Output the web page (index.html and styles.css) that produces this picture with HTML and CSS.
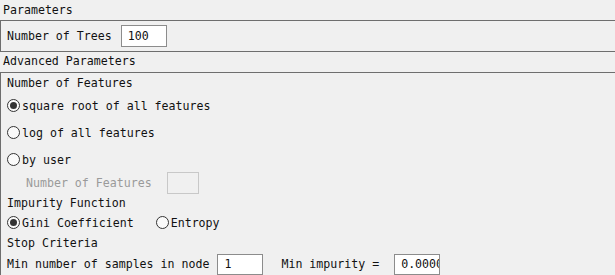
FILE: index.html
```html
<!DOCTYPE html>
<html lang="en">

<head>
    <meta charset="UTF-8">
    <title>Random Forest Parameters</title>
    <link rel="stylesheet" href="styles.css">
</head>

<body>
    <div class="title">Parameters</div>
    <div class="box box-basic">
        <div class="row">
            <span class="label">Number of Trees</span>
            <input class="field field-trees" type="text" value="100">
        </div>
    </div>

    <div class="title title-adv">Advanced Parameters</div>
    <div class="box box-adv">
        <div class="row r-head">Number of Features</div>
        <label class="row r-radio"><span class="radio checked"></span>square root of all features</label>
        <label class="row r-radio"><span class="radio"></span>log of all features</label>
        <label class="row r-radio"><span class="radio"></span>by user</label>
        <div class="row r-user">
            <span class="label disabled">Number of Features</span>
            <span class="field field-off"></span>
        </div>
        <div class="row r-imp">Impurity Function</div>
        <div class="row r-gini">
            <label class="opt"><span class="radio checked"></span>Gini Coefficient</label>
            <label class="opt opt-entropy"><span class="radio"></span>Entropy</label>
        </div>
        <div class="row r-stop">Stop Criteria</div>
        <div class="row r-min">
            <span class="label">Min number of samples in node</span>
            <input class="field field-min" type="text" value="1">
            <span class="label label-imp">Min impurity =</span>
            <input class="field field-imp" type="text" value="0.0000">
        </div>
    </div>
</body>

</html>
```

FILE: styles.css
```css
body {
    margin: 0;
    background: #f0f0f0;
    font-family: "DejaVu Sans Mono", "Liberation Mono", monospace;
    font-size: 11.6px;
    color: #111;
    overflow: hidden;
    height: 275px;
}

.title {
    height: 20px;
    line-height: 20px;
    padding-left: 3px;
}

.title-adv {
    height: 20px;
    line-height: 18px;
}

.box {
    border: 1px solid #6e6e6e;
    border-right: none;
}

.box-basic {
    height: 30px;
    display: flex;
    align-items: center;
    padding-left: 6px;
}

.box-adv {
    border-bottom: none;
    padding-left: 6px;
    height: 210px;
}

.row {
    display: flex;
    align-items: center;
    white-space: nowrap;
}

.field {
    box-sizing: border-box;
    width: 46px;
    height: 22px;
    border: 1px solid #8c8c8c;
    background: #fff;
    font: inherit;
    color: #111;
    padding: 0 0 0 6px;
    margin: 0;
    outline: none;
}

.field-trees {
    margin-left: 9px;
}

.r-head {
    height: 20px;
}

.r-radio {
    height: 27px;
}

.r-radio:first-of-type {
    margin-top: -1px;
}

.radio {
    box-sizing: border-box;
    width: 13px;
    height: 13px;
    border: 1px solid #333;
    border-radius: 50%;
    background: #fafafa;
    margin-right: 2px;
    position: relative;
    flex: none;
}

.radio.checked::after {
    content: "";
    position: absolute;
    left: 2px;
    top: 2px;
    width: 7px;
    height: 7px;
    border-radius: 50%;
    background: #333;
}

.r-user {
    height: 19px;
    padding-left: 19px;
}

.disabled {
    color: #9a9a9a;
}

.field-off {
    width: 32px;
    background: #f0f0f0;
    border-color: #c8c8c8;
    margin-left: 15px;
}

.r-imp {
    height: 21px;
}

.r-gini {
    height: 19px;
}

.opt {
    display: flex;
    align-items: center;
}

.opt-entropy {
    margin-left: 22px;
}

.r-stop {
    height: 22px;
}

.r-min {
    height: 20px;
}

.field-min {
    height: 21px;
    margin-left: 8px;
}

.label-imp {
    margin-left: 18px;
}

.field-imp {
    height: 21px;
    margin-left: 15px;
    padding-left: 6px;
}
```
